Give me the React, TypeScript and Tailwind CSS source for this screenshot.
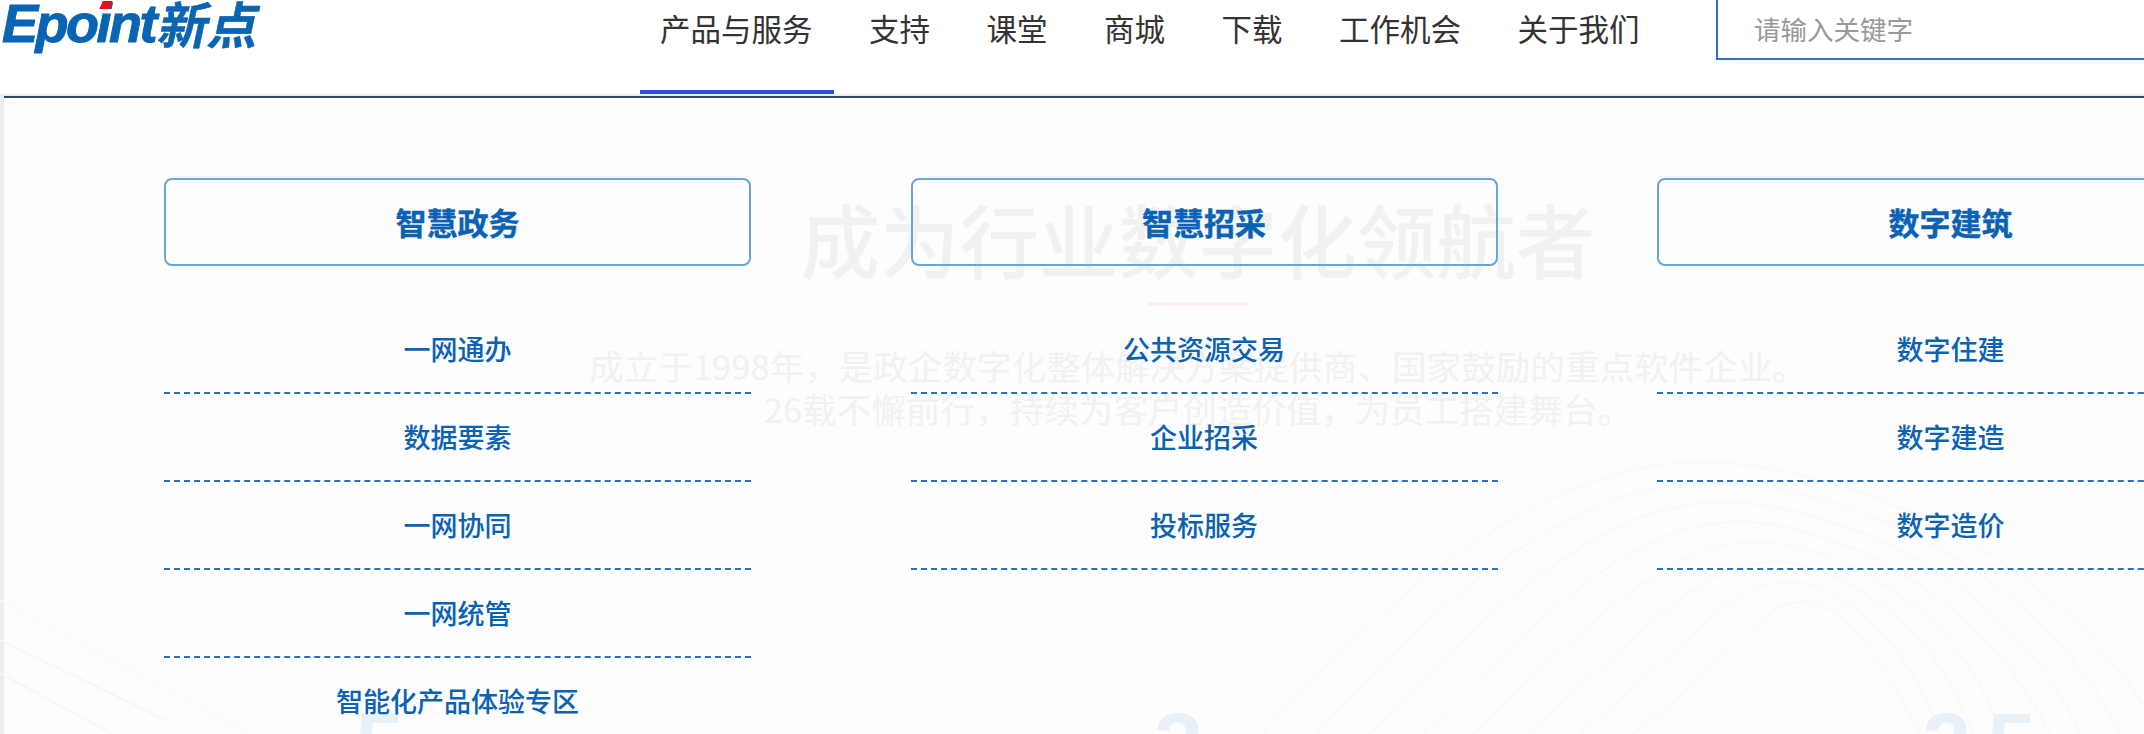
const cjk = "font-['PingFang_SC','Noto_Sans_CJK_SC',sans-serif]";

const navItems = ["产品与服务", "支持", "课堂", "商城", "下载", "工作机会", "关于我们"];

const columns = [
  { title: "智慧政务", links: ["一网通办", "数据要素", "一网协同", "一网统管", "智能化产品体验专区"] },
  { title: "智慧招采", links: ["公共资源交易", "企业招采", "投标服务"] },
  { title: "数字建筑", links: ["数字住建", "数字建造", "数字造价"] },
];

// faint concentric arcs behind the stats: left foot, left at y640, peak, right at y640, right foot
const arcs = [
  [1263, 1347, 1700, 462, 2110, 2160],
  [1317, 1400, 1710, 482, 2075, 2120],
  [1370, 1457, 1722, 502, 2040, 2080],
  [1423, 1513, 1738, 522, 2005, 2050],
  [1473, 1570, 1755, 542, 1973, 2000],
  [1527, 1633, 1775, 562, 1940, 1973],
  [1580, 1693, 1790, 582, 1907, 1940],
  [1633, 1757, 1805, 602, 1873, 1920],
];

function arcPath([lf, lt, px, py, rt, rf]: number[]) {
  const rise = 734 - py;
  const ls = ((lt - lf) / 94) * rise * 0.7;
  const rs = ((rf - rt) / 94) * rise * 0.7;
  return `M${lf} 734 C${lf + ls} ${734 - rise * 0.7} ${px - (px - lf) * 0.28} ${py} ${px} ${py} C${px + (rf - px) * 0.28} ${py} ${rf - rs} ${734 - rise * 0.7} ${rf} 734`;
}

function Logo() {
  return (
    <div className="relative h-[70px] w-[270px] text-[#0a64b4]">
      <span className="absolute left-[2px] top-[-19px] font-['Liberation_Sans',sans-serif] text-[54px] font-bold italic leading-[84px] tracking-[-2.5px] [-webkit-text-stroke:1px_#0a64b4]">
        Epoint
      </span>
      <span className="absolute left-[101px] top-[1px] h-[8px] w-[10px] -skew-x-[24deg] bg-[#e60f1e]" />
      <span className={`absolute left-[161px] top-[-14px] -skew-x-12 text-[50px] font-bold leading-[72px] [-webkit-text-stroke:0.5px_#0a64b4] ${cjk}`}>
        新点
      </span>
    </div>
  );
}

function Header() {
  return (
    <header className="flex h-[94px] bg-white">
      <div className="w-[640px] shrink-0">
        <Logo />
      </div>
      <nav className="flex gap-[15px]">
        {navItems.map((item, i) => (
          <a
            key={item}
            href="#"
            className={`h-[94px] pl-[20px] pr-[21.5px] text-[30.5px] leading-[56px] text-[#333] ${i === 0 ? "border-b-4 border-[#2b4fe0]" : ""}`}
          >
            {item}
          </a>
        ))}
      </nav>
      <div className="ml-auto h-[60px] w-[428px] border-b-2 border-l-2 border-[#2f6fc9] pl-[36px]">
        <input
          placeholder="请输入关键字"
          className="h-[56px] w-full bg-transparent text-[26.5px] text-[#333] outline-none placeholder:text-[#999]"
        />
      </div>
    </header>
  );
}

function Backdrop() {
  return (
    <>
      <svg className="absolute left-0 top-[-98px] h-[734px] w-[2144px]" viewBox="0 0 2144 734" fill="none">
        {arcs.map((arc) => (
          <path key={arc[0]} d={arcPath(arc)} stroke="#f7fafb" strokeWidth="2" />
        ))}
        <path d="M0 640 L170 722" stroke="#f6f7f9" strokeWidth="2" />
        <path d="M0 673 L112 734" stroke="#f6f7f9" strokeWidth="2" />
        <path d="M0 600 L250 734" stroke="#f9fafb" strokeWidth="2" />
      </svg>
      <div className={`absolute left-0 top-0 flex w-[2396px] flex-col items-center pt-[92px] text-[#f1f1f1] ${cjk}`}>
        <div className="text-[79.5px] font-medium leading-[96px]">成为行业数字化领航者</div>
        <div className="mt-4 h-1 w-[100px] bg-[#fdeeee]" />
        <div className="mt-[38px] text-center text-[34.6px] leading-[43px]">
          <p>成立于1998年，是政企数字化整体解决方案提供商、国家鼓励的重点软件企业。</p>
          <p>26载不懈前行，持续为客户创造价值，为员工搭建舞台。</p>
        </div>
      </div>
      <span className="absolute left-[355px] top-[596px] font-['Liberation_Sans',sans-serif] text-[88px] font-bold leading-[100px] text-[#e8f0f8]">
        5
      </span>
      <span className="absolute left-[1154px] top-[596px] font-['Liberation_Sans',sans-serif] text-[88px] font-bold leading-[100px] text-[#e8f0f8]">
        3
      </span>
      <span className="absolute left-[1922px] top-[596px] font-['Liberation_Sans',sans-serif] text-[88px] font-bold leading-[100px] tracking-[16px] text-[#e8f0f8]">
        25
      </span>
    </>
  );
}

function ProductColumn({ title, links }: { title: string; links: string[] }) {
  return (
    <div className="w-[587px] shrink-0">
      <div className="flex h-[88px] items-center justify-center rounded-lg border-2 border-[#68a5d9] text-[31px] font-bold text-[#0a62b5] [-webkit-text-stroke:0.4px_#0a62b5]">
        {title}
      </div>
      <ul className="mt-[40px]">
        {links.map((link) => (
          <li
            key={link}
            className="flex h-[88px] items-center justify-center border-b-2 border-dashed border-[#2a70bd] text-[27px] font-medium text-[#0a62b5]"
          >
            {link}
          </li>
        ))}
      </ul>
    </div>
  );
}

export default function App() {
  return (
    <div className={`h-[734px] w-[2144px] overflow-hidden bg-white ${cjk}`}>
      <Header />
      <div className="h-[2px] bg-[#ebebeb]" />
      <div className="flex h-[638px]">
        <div className="w-1 shrink-0 bg-[#ecedee]" />
        <div className="relative flex-1 border-t-2 border-[#2f4770] bg-[#fdfdfd]">
          <div className="absolute left-[-4px] top-0 h-[636px] w-[2144px]">
            <Backdrop />
          </div>
          <main className="relative flex gap-[159.5px] pl-[160px] pt-[80px]">
            {columns.map((col) => (
              <ProductColumn key={col.title} title={col.title} links={col.links} />
            ))}
          </main>
        </div>
      </div>
    </div>
  );
}
